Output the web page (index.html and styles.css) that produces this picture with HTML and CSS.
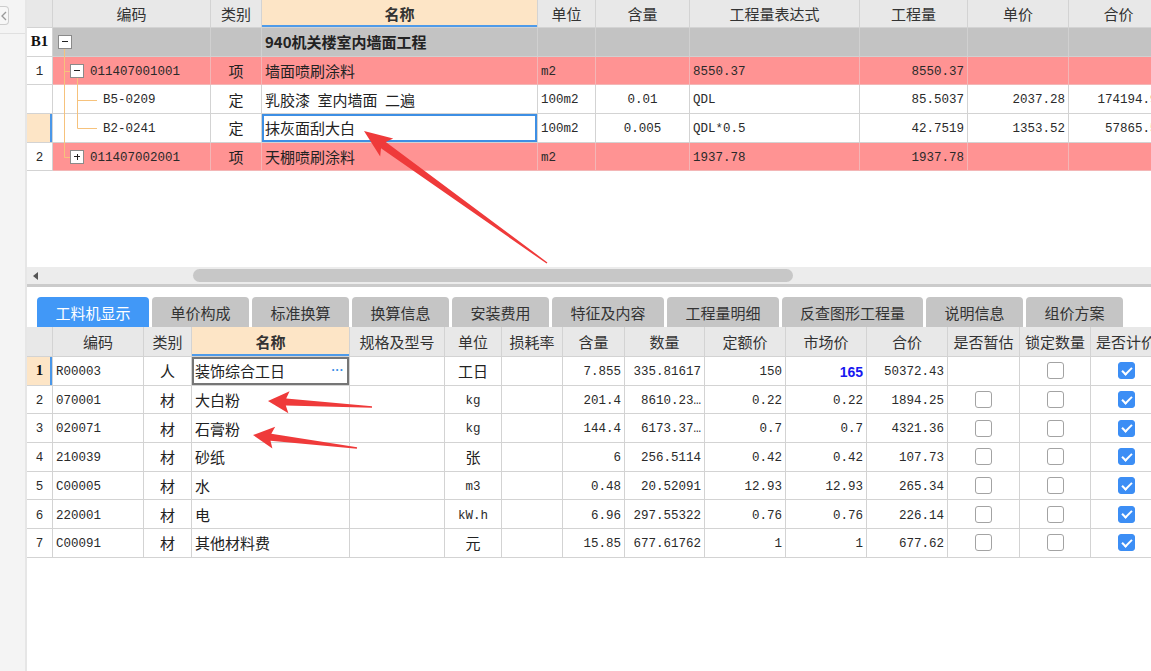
FILE: index.html
```html
<!DOCTYPE html>
<html lang="zh-CN">
<head>
<meta charset="utf-8">
<title>工料机显示</title>
<link rel="stylesheet" href="styles.css">
</head>
<body>
<div class="app">
  <aside class="side">
    <div class="side-top">
      <div class="side-btn"><svg width="6" height="10" viewBox="0 0 6 10"><path d="M5 1 L1 5 L5 9" fill="none" stroke="#9a9a9a" stroke-width="1.3"/></svg></div>
    </div>
  </aside>

  <main class="main">
    <section class="upper">
      <div class="grid top">
        <div class="row head">
          <div class="c"></div>
          <div class="c ctr">编码</div>
          <div class="c ctr">类别</div>
          <div class="c ctr hname">名称</div>
          <div class="c ctr">单位</div>
          <div class="c ctr">含量</div>
          <div class="c ctr">工程量表达式</div>
          <div class="c ctr">工程量</div>
          <div class="c ctr">单价</div>
          <div class="c ctr">合价</div>
        </div>
        <div class="row gray">
          <div class="c ctr rn b1">B1</div>
          <div class="c code pad-b1"><span class="tbox"></span></div>
          <div class="c"></div>
          <div class="c bold">940机关楼室内墙面工程</div>
          <div class="c"></div>
          <div class="c"></div>
          <div class="c"></div>
          <div class="c"></div>
          <div class="c"></div>
          <div class="c"></div>
        </div>
        <div class="row red">
          <div class="c ctr rn num">1</div>
          <div class="c code pad-l1"><span class="tbox"></span><span class="num">011407001001</span></div>
          <div class="c ctr">项</div>
          <div class="c">墙面喷刷涂料</div>
          <div class="c num">m2</div>
          <div class="c"></div>
          <div class="c num">8550.37</div>
          <div class="c rt num">8550.37</div>
          <div class="c"></div>
          <div class="c"></div>
        </div>
        <div class="row">
          <div class="c rn"></div>
          <div class="c code pad-l2"><span class="num">B5-0209</span></div>
          <div class="c ctr">定</div>
          <div class="c">乳胶漆&ensp;室内墙面&ensp;二遍</div>
          <div class="c num">100m2</div>
          <div class="c ctr num">0.01</div>
          <div class="c num">QDL</div>
          <div class="c rt num">85.5037</div>
          <div class="c rt num">2037.28</div>
          <div class="c rt num">174194.98</div>
        </div>
        <div class="row">
          <div class="c rn cur"></div>
          <div class="c code pad-l2"><span class="num">B2-0241</span></div>
          <div class="c ctr">定</div>
          <div class="c sel-blue">抹灰面刮大白</div>
          <div class="c num">100m2</div>
          <div class="c ctr num">0.005</div>
          <div class="c num">QDL*0.5</div>
          <div class="c rt num">42.7519</div>
          <div class="c rt num">1353.52</div>
          <div class="c rt num">57865.56</div>
        </div>
        <div class="row red">
          <div class="c ctr rn num">2</div>
          <div class="c code pad-l1"><span class="tbox plus"></span><span class="num">011407002001</span></div>
          <div class="c ctr">项</div>
          <div class="c">天棚喷刷涂料</div>
          <div class="c num">m2</div>
          <div class="c"></div>
          <div class="c num">1937.78</div>
          <div class="c rt num">1937.78</div>
          <div class="c"></div>
          <div class="c"></div>
        </div>
      </div>
    </section>

    <div class="hscroll"><span class="hs-arrow"></span><span class="hs-thumb"></span></div>

    <nav class="tabs">
      <div class="tab active w112">工料机显示</div>
      <div class="tab w97">单价构成</div>
      <div class="tab w97">标准换算</div>
      <div class="tab w97">换算信息</div>
      <div class="tab w97">安装费用</div>
      <div class="tab w112">特征及内容</div>
      <div class="tab w112">工程量明细</div>
      <div class="tab w141">反查图形工程量</div>
      <div class="tab w97">说明信息</div>
      <div class="tab w97">组价方案</div>
    </nav>

    <div class="grid bottom">
      <div class="row head">
        <div class="c"></div>
        <div class="c ctr">编码</div>
        <div class="c ctr">类别</div>
        <div class="c ctr hname">名称</div>
        <div class="c ctr">规格及型号</div>
        <div class="c ctr">单位</div>
        <div class="c ctr">损耗率</div>
        <div class="c ctr">含量</div>
        <div class="c ctr">数量</div>
        <div class="c ctr">定额价</div>
        <div class="c ctr">市场价</div>
        <div class="c ctr">合价</div>
        <div class="c ctr">是否暂估</div>
        <div class="c ctr">锁定数量</div>
        <div class="c ctr clip">是否计价</div>
      </div>
      <div class="row">
        <div class="c ctr rn cur b1">1</div>
        <div class="c num">R00003</div>
        <div class="c ctr">人</div>
        <div class="c sel-gray">装饰综合工日<span class="more">···</span></div>
        <div class="c"></div>
        <div class="c ctr">工日</div>
        <div class="c"></div>
        <div class="c rt num">7.855</div>
        <div class="c rt num">335.81617</div>
        <div class="c rt num">150</div>
        <div class="c rt price">165</div>
        <div class="c rt num">50372.43</div>
        <div class="c ctr"></div>
        <div class="c ctr"><span class="cb"></span></div>
        <div class="c ctr"><span class="cb on"></span></div>
      </div>
      <div class="row">
        <div class="c ctr rn num">2</div>
        <div class="c num">070001</div>
        <div class="c ctr">材</div>
        <div class="c">大白粉</div>
        <div class="c"></div>
        <div class="c ctr num">kg</div>
        <div class="c"></div>
        <div class="c rt num">201.4</div>
        <div class="c rt num">8610.23…</div>
        <div class="c rt num">0.22</div>
        <div class="c rt num">0.22</div>
        <div class="c rt num">1894.25</div>
        <div class="c ctr"><span class="cb"></span></div>
        <div class="c ctr"><span class="cb"></span></div>
        <div class="c ctr"><span class="cb on"></span></div>
      </div>
      <div class="row">
        <div class="c ctr rn num">3</div>
        <div class="c num">020071</div>
        <div class="c ctr">材</div>
        <div class="c">石膏粉</div>
        <div class="c"></div>
        <div class="c ctr num">kg</div>
        <div class="c"></div>
        <div class="c rt num">144.4</div>
        <div class="c rt num">6173.37…</div>
        <div class="c rt num">0.7</div>
        <div class="c rt num">0.7</div>
        <div class="c rt num">4321.36</div>
        <div class="c ctr"><span class="cb"></span></div>
        <div class="c ctr"><span class="cb"></span></div>
        <div class="c ctr"><span class="cb on"></span></div>
      </div>
      <div class="row">
        <div class="c ctr rn num">4</div>
        <div class="c num">210039</div>
        <div class="c ctr">材</div>
        <div class="c">砂纸</div>
        <div class="c"></div>
        <div class="c ctr">张</div>
        <div class="c"></div>
        <div class="c rt num">6</div>
        <div class="c rt num">256.5114</div>
        <div class="c rt num">0.42</div>
        <div class="c rt num">0.42</div>
        <div class="c rt num">107.73</div>
        <div class="c ctr"><span class="cb"></span></div>
        <div class="c ctr"><span class="cb"></span></div>
        <div class="c ctr"><span class="cb on"></span></div>
      </div>
      <div class="row">
        <div class="c ctr rn num">5</div>
        <div class="c num">C00005</div>
        <div class="c ctr">材</div>
        <div class="c">水</div>
        <div class="c"></div>
        <div class="c ctr num">m3</div>
        <div class="c"></div>
        <div class="c rt num">0.48</div>
        <div class="c rt num">20.52091</div>
        <div class="c rt num">12.93</div>
        <div class="c rt num">12.93</div>
        <div class="c rt num">265.34</div>
        <div class="c ctr"><span class="cb"></span></div>
        <div class="c ctr"><span class="cb"></span></div>
        <div class="c ctr"><span class="cb on"></span></div>
      </div>
      <div class="row">
        <div class="c ctr rn num">6</div>
        <div class="c num">220001</div>
        <div class="c ctr">材</div>
        <div class="c">电</div>
        <div class="c"></div>
        <div class="c ctr num">kW.h</div>
        <div class="c"></div>
        <div class="c rt num">6.96</div>
        <div class="c rt num">297.55322</div>
        <div class="c rt num">0.76</div>
        <div class="c rt num">0.76</div>
        <div class="c rt num">226.14</div>
        <div class="c ctr"><span class="cb"></span></div>
        <div class="c ctr"><span class="cb"></span></div>
        <div class="c ctr"><span class="cb on"></span></div>
      </div>
      <div class="row">
        <div class="c ctr rn num">7</div>
        <div class="c num">C00091</div>
        <div class="c ctr">材</div>
        <div class="c">其他材料费</div>
        <div class="c"></div>
        <div class="c ctr">元</div>
        <div class="c"></div>
        <div class="c rt num">15.85</div>
        <div class="c rt num">677.61762</div>
        <div class="c rt num">1</div>
        <div class="c rt num">1</div>
        <div class="c rt num">677.62</div>
        <div class="c ctr"><span class="cb"></span></div>
        <div class="c ctr"><span class="cb"></span></div>
        <div class="c ctr"><span class="cb on"></span></div>
      </div>
    </div>
  </main>

  <svg class="overlay" width="1151" height="671" viewBox="0 0 1151 671">
    <g stroke="#f6c27c" stroke-width="1" fill="none">
      <path d="M64.5 49 V157.5 H70"/>
      <path d="M64.5 71.5 H70"/>
      <path d="M77.5 78 V128.5"/>
      <path d="M77.5 100.5 H97"/>
      <path d="M77.5 128.5 H97"/>
    </g>
    <g fill="#ef3a3a">
      <polygon points="364,131 393.2,138.6 385.8,141.9 547.4,262.4 546.6,263.6 381,148.3 380.2,156.4"/>
      <polygon points="268,401 289.6,391.2 286.2,398.5 372,406.2 372,407.8 285.8,405.5 288.4,413.2"/>
      <polygon points="253,435 275.2,426.7 271.3,433.7 357.1,447.2 356.9,448.8 270.5,440.7 272.4,448.5"/>
    </g>
  </svg>
</div>
</body>
</html>
```

FILE: styles.css
```css
* { box-sizing: border-box; margin: 0; padding: 0; }
html, body { width: 1151px; height: 671px; overflow: hidden; background: #fff; }
body {
  font-family: "Noto Sans CJK SC", "Noto Sans", sans-serif;
  font-size: 15px;
  color: #222;
}
.app { display: flex; width: 1151px; height: 671px; position: relative; }

/* left strip */
.side { width: 27px; flex: none; background: #f4f4f4; border-right: 2px solid #e6e6e6; }
.side-top { height: 34px; border-bottom: 1px solid #e0e0e0; padding-top: 6px; }
.side-btn {
  width: 9px; height: 19px;
  border: 1px solid #cdcdcd; border-left: none;
  border-radius: 0 4px 4px 0;
  background: #f7f7f7;
  display: flex; align-items: center; justify-content: center;
}

.main { flex: 1; min-width: 0; display: flex; flex-direction: column; overflow: hidden; }
.upper { height: 267px; flex: none; overflow: hidden; }

/* grids */
.grid { width: max-content; }
.row { display: grid; height: 28.7px; }
.top .row { grid-template-columns: 26px 158px 51px 276px 58px 94px 170px 108px 101px 100px; }
.bottom .row { grid-template-columns: 26px 91px 48px 158px 95px 57px 61px 62px 80px 81px 81px 81px 72px 71px 72px; }
.row.head { height: 28px; background: #e8e8e8; color: #333; }
.bottom .row.head { height: 30px; }

.c {
  border-right: 1px solid #d3d3d3;
  border-bottom: 1px solid #d3d3d3;
  display: flex; align-items: center;
  padding: 0 3px;
  white-space: pre;
  overflow: hidden;
  line-height: 1;
}
.ctr { justify-content: center; }
.rt { justify-content: flex-end; }
.clip { justify-content: flex-start; padding-left: 5px; }
.num { font-family: "Liberation Mono", "DejaVu Sans Mono", monospace; font-size: 12.5px; color: #2a2a2a; }
.c.num { padding-top: 3px; }
span.num { margin-top: 3px; }
.bold { font-weight: 700; }

.hname { background: #fde5c6; font-weight: 700; box-shadow: inset 0 -2px 0 #4f9be9; }

.row.gray .c { background: #c3c3c3; border-color: #d0d0d0; }
.row.red .c { background: #ff9393; border-color: #f3b6b6; }
.row .c.rn { background: #fff; border-color: #d3d3d3; }
.row .c.rn.cur { background: #fde5c6; box-shadow: inset -2px 0 0 #4a97e8; }
.b1 { font-family: "Liberation Serif", serif; font-weight: 700; font-size: 15px; color: #111; }

.sel-blue { box-shadow: inset 0 0 0 2px #3d8fe4; }
.sel-gray { box-shadow: inset 0 0 0 2px #767676; }
.more {
  margin-left: auto; margin-right: 4px;
  color: #3a8ee6; font-weight: 700;
  font-family: "Liberation Mono", monospace; font-size: 12px;
  letter-spacing: -3px;
}
.price { color: #1818f0; font-weight: 700; font-family: "Liberation Sans", sans-serif; font-size: 14px; padding-top: 2px; }

/* tree */
.code { padding-left: 0; }
.pad-b1 { padding-left: 5px; }
.pad-l1 { padding-left: 17px; }
.pad-l2 { padding-left: 50px; }
.tbox {
  width: 14px; height: 14px; flex: none;
  border: 1px solid #8a8a8a; background: #fff;
  position: relative; margin-right: 6px;
}
.tbox::before {
  content: ""; position: absolute; left: 3px; top: 5.5px; width: 6px; height: 1px; background: #222;
}
.tbox.plus::after {
  content: ""; position: absolute; left: 5.5px; top: 3px; width: 1px; height: 6px; background: #222;
}

/* horizontal scrollbar */
.hscroll {
  height: 20px; flex: none;
  background: #ececec;
  border-bottom: 3px solid #cbcbcb;
  display: flex; align-items: center;
  padding-left: 6px;
}
.hs-arrow {
  width: 0; height: 0;
  border-top: 4px solid transparent; border-bottom: 4px solid transparent;
  border-right: 5px solid #555;
}
.hs-thumb { margin-left: 155px; width: 600px; height: 13px; border-radius: 7px; background: #c7c7c7; }

/* tabs */
.tabs { display: flex; gap: 3px; padding: 10px 0 0 10px; height: 40px; flex: none; }
.tab {
  height: 30px; flex: none;
  background: #c5c5c5; color: #333;
  border-radius: 4px 4px 0 0;
  display: flex; align-items: center; justify-content: center;
}
.tab.active { background: #4198f7; color: #fff; }
.w97 { width: 97px; }
.w112 { width: 112px; }
.w141 { width: 141px; }

/* checkboxes */
.cb { width: 17px; height: 17px; border: 1px solid #a3a3a3; border-radius: 3px; background: #fff; position: relative; }
.cb.on { background: #3c8ef5; border-color: #3c8ef5; }
.cb.on::after {
  content: ""; position: absolute; left: 5px; top: 1.5px;
  width: 4px; height: 8px;
  border: solid #fff; border-width: 0 2px 2px 0;
  transform: rotate(45deg);
}

.overlay { position: absolute; left: 0; top: 0; pointer-events: none; }
```
